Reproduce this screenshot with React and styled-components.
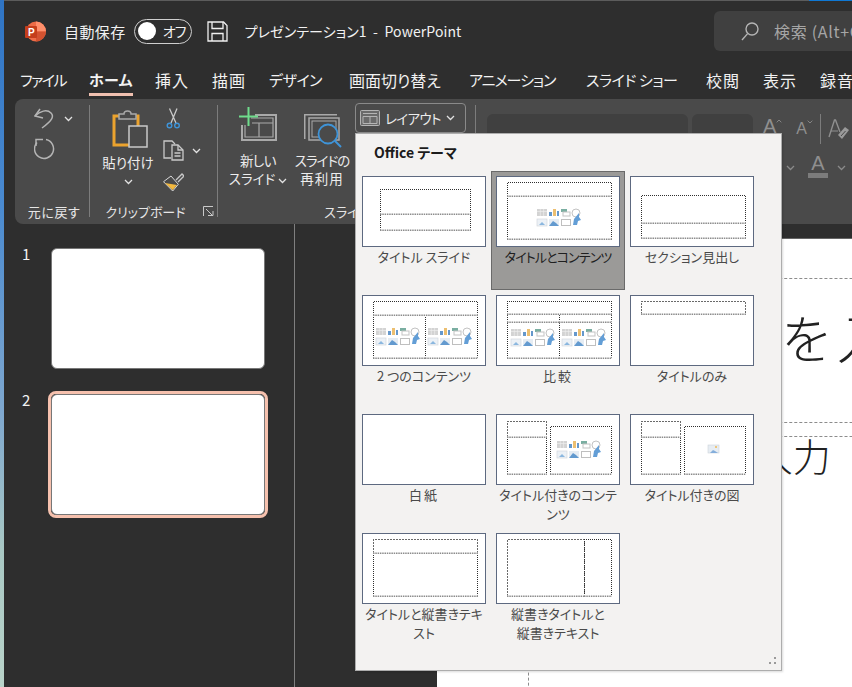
import React from "react";
import styled, { createGlobalStyle } from "styled-components";

const UI_FONT = `"Noto Sans CJK JP", "Liberation Sans", sans-serif`;

const GlobalStyle = createGlobalStyle`
  html, body { margin: 0; padding: 0; background: #2e2e2e; }
  * { box-sizing: border-box; }
  body {
    font-family: ${UI_FONT};
    font-feature-settings: "palt";
    overflow: hidden;
  }
`;

const Shell = styled.div`
  display: flex;
  width: 852px;
  height: 687px;
  overflow: hidden;
`;
const DesktopStrip = styled.div`
  width: 4px;
  background: linear-gradient(180deg, #2f74c4 0%, #4a8ad0 30%, #7fa8cf 60%, #a9c8c4 80%, #b9d3c9 100%);
`;
const Window = styled.div`
  position: relative;
  flex: 1;
  min-width: 0;
  display: flex;
  flex-direction: column;
  background: #2e2e2e;
`;
const TopEdge = styled.div`
  display: flex;
  height: 1px;
  background: #5c5c5c;
  justify-content: flex-end;
  & > i {
    width: 43px;
    background: #0f78d4;
  }
`;

/* title bar */
const TitleBar = styled.div`
  display: flex;
  align-items: center;
  height: 65px;
  padding: 0 0 5px 21px;
  color: #f2f2f2;
`;
const AutoSave = styled.span`
  margin-left: 18px;
  font-size: 15px;
  letter-spacing: 0.4px;
`;
const Toggle = styled.div`
  display: flex;
  align-items: center;
  width: 58px;
  height: 25px;
  margin-left: 8px;
  padding-left: 3px;
  border: 1px solid #cfcfcf;
  border-radius: 13px;
  font-size: 14px;
  letter-spacing: -0.8px;
  & > b {
    width: 18px;
    height: 18px;
    margin-right: 7px;
    border-radius: 50%;
    background: #fff;
  }
`;
const SaveButton = styled.svg`
  margin-left: 15px;
  flex: none;
`;
const DocTitle = styled.span`
  margin-left: 17px;
  font-size: 14px;
  letter-spacing: 0.1px;
  white-space: pre;
`;
const SearchBox = styled.div`
  display: flex;
  align-items: center;
  gap: 15px;
  margin-left: auto;
  width: 138px;
  height: 40px;
  padding-left: 27px;
  border-radius: 6px 0 0 6px;
  background: #404040;
  color: #a6a6a6;
  font-size: 16px;
  letter-spacing: 0.7px;
  white-space: nowrap;
  overflow: hidden;
`;

/* tabs */
const TabRow = styled.div`
  display: flex;
  height: 33px;
  padding-left: 16px;
  white-space: nowrap;
`;
const Tab = styled.div`
  flex: none;
  width: ${(p) => p.$w}px;
  color: #f2f2f2;
`;
const TabText = styled.span`
  display: inline-block;
  height: 30px;
  padding-top: 1px;
  font-size: ${(p) => p.$fs}px;
  line-height: 26px;
  letter-spacing: ${(p) => p.$ls}px;
  font-weight: ${(p) => (p.$active ? 700 : 400)};
  border-bottom: 3px solid ${(p) => (p.$active ? "#f0c0b0" : "transparent")};
`;

/* ribbon */
const Ribbon = styled.div`
  display: flex;
  height: 125px;
  margin-left: 11px;
  padding: 6px 0 7px;
  border-radius: 8px 0 0 8px;
  background: #4a4a4a;
  color: #ececec;
  overflow: hidden;
`;
const Group = styled.div`
  position: relative;
  display: flex;
  flex-direction: column;
  flex: none;
  width: ${(p) => p.$w}px;
  border-right: 1px solid ${(p) => (p.$plain ? "transparent" : "#7c7c7c")};
`;
const GroupBody = styled.div`
  flex: 1;
  display: flex;
  min-height: 0;
`;
const GroupLabel = styled.div`
  height: 14px;
  margin-bottom: -2px;
  text-align: center;
  font-size: 13px;
  line-height: 14px;
  letter-spacing: ${(p) => p.$ls ?? 0}px;
  padding-left: ${(p) => p.$pl ?? 0}px;
  padding-right: ${(p) => p.$pr ?? 0}px;
  white-space: nowrap;
  color: #e6e6e6;
`;
const Launcher = styled.svg`
  position: absolute;
  right: 3px;
  bottom: 0;
`;
const UndoStack = styled.div`
  display: flex;
  flex-direction: column;
  gap: 9px;
  padding: 3px 0 0 19px;
`;
const IconRow = styled.div`
  display: flex;
  align-items: center;
  gap: ${(p) => p.$gap ?? 0}px;
  padding-left: ${(p) => p.$pl ?? 0}px;
`;
const BigButton = styled.div`
  display: flex;
  flex-direction: column;
  align-items: center;
  flex: none;
  width: ${(p) => p.$w}px;
  margin-left: ${(p) => p.$ml ?? 0}px;
  font-size: 13.5px;
  line-height: 19px;
  white-space: nowrap;
  & > svg:first-child {
    margin-top: ${(p) => p.$top ?? 2}px;
    margin-bottom: ${(p) => p.$iconGap ?? 8}px;
    margin-left: ${(p) => p.$iconShift ?? 0}px;
  }
`;
const Line = styled.span`
  display: block;
  margin-top: ${(p) => p.$mt ?? 0}px;
  letter-spacing: ${(p) => p.$ls ?? 0}px;
`;
const SmallStack = styled.div`
  display: flex;
  flex-direction: column;
  gap: 11px;
  padding: 3px 0 0 3px;
`;
const LayoutButton = styled.div`
  display: flex;
  align-items: center;
  align-self: flex-start;
  flex: none;
  width: 111px;
  height: 30px;
  margin: -2px 0 0 1px;
  padding-left: 4px;
  border: 1px solid #8a8a8a;
  border-radius: 4px;
  font-size: 13.5px;
  letter-spacing: -0.6px;
  gap: 5px;
`;
const FontRows = styled.div`
  display: flex;
  flex-direction: column;
  padding: 8px 0 0 11px;
`;
const ComboRow = styled.div`
  display: flex;
  align-items: center;
  gap: 4px;
  height: 32px;
`;
const Combo = styled.div`
  display: flex;
  align-items: flex-end;
  justify-content: flex-end;
  flex: none;
  width: ${(p) => p.$w}px;
  height: 30px;
  padding: 0 2px 5px 0;
  border-radius: 6px;
  background: #404040;
`;
const DimLetter = styled.span`
  display: inline-flex;
  align-items: flex-start;
  flex: none;
  margin: ${(p) => p.$mt ?? 0}px 0 0 ${(p) => p.$ml}px;
  color: #8f8f8f;
  font-family: "Liberation Sans", sans-serif;
  font-size: ${(p) => p.$fs}px;
  line-height: 24px;
`;
const RibbonSep = styled.div`
  flex: none;
  width: 1px;
  height: 30px;
  margin: 0 3px 0 3px;
  background: #7c7c7c;
`;
const ColorRow = styled.div`
  display: flex;
  align-items: flex-start;
  padding: 8px 0 0 299px;
`;
const ColorLetter = styled.div`
  width: 20px;
  margin: 0 9px 0 13px;
  border-bottom: 5px solid #7c7c7c;
  color: #8f8f8f;
  font-family: "Liberation Sans", sans-serif;
  font-size: 20px;
  line-height: 20px;
  text-align: center;
`;

/* main area */
const Main = styled.div`
  flex: 1;
  display: flex;
  min-height: 0;
`;
const Sidebar = styled.div`
  display: flex;
  flex-direction: column;
  gap: 19px;
  flex: none;
  width: 291px;
  padding: 21px 0 0 18px;
  border-right: 1px solid #7f7f7f;
`;
const SlideRow = styled.div`
  display: flex;
  align-items: flex-start;
  color: #f2f2f2;
  font-size: 15px;
  line-height: 18px;
`;
const SlideNum = styled.span`
  width: 26px;
`;
const SlideThumb = styled.div`
  width: 220px;
  height: 127px;
  border: 3px solid ${(p) => (p.$selected ? "#f6c1ae" : "transparent")};
  border-radius: 8px;
  & > div {
    height: 100%;
    border: 1px solid #777;
    border-radius: 6px;
    background: #fff;
  }
`;
const Canvas = styled.div`
  flex: 1;
  min-width: 0;
  padding: 14px 0 0 142px;
`;
const Slide = styled.div`
  height: 100%;
  padding: 39px 0 0 91px;
  background: #fff;
  border-top: 1px solid #666;
  overflow: hidden;
`;
const TitleHolder = styled.div`
  width: 420px;
  height: 145px;
  padding: 22px 0 0 28px;
  border: 1px dashed #8c8c8c;
  color: #222;
  font-size: 52px;
  font-weight: 300;
  line-height: 72px;
  letter-spacing: 4px;
  white-space: nowrap;
  font-feature-settings: "palt" 0;
`;
const BodyHolder = styled.div`
  width: 420px;
  height: 300px;
  margin-top: 13px;
  padding: 0 0 0 37px;
  border: 1px dashed #8c8c8c;
  color: #222;
  font-size: 38px;
  font-weight: 300;
  line-height: 36px;
  white-space: nowrap;
  font-feature-settings: "palt" 0;
`;

/* layout gallery */
const Popup = styled.div`
  position: absolute;
  left: 351px;
  top: 133px;
  width: 427px;
  height: 538px;
  padding-left: 1px;
  border: 1px solid #adadad;
  background: #f3f2f1;
  box-shadow: 1px 1px 2px rgba(0, 0, 0, 0.15);
`;
const PopupTitle = styled.div`
  height: 37px;
  padding-left: 17px;
  color: #1b1b1b;
  font-size: 14px;
  font-weight: 700;
  line-height: 36px;
`;
const TileGrid = styled.div`
  display: grid;
  grid-template-columns: repeat(3, 134px);
  grid-auto-rows: 119px;
`;
const Tile = styled.div`
  padding: ${(p) => (p.$active ? "4px" : "5px")};
  border: ${(p) => (p.$active ? "1px solid #6a6a6a" : "0")};
  background: ${(p) => (p.$active ? "#9b9a98" : "transparent")};
`;
const TileThumb = styled.svg`
  display: block;
  width: 124px;
  height: 71px;
  background: #fff;
  outline: 1px solid #5d6980;
  outline-offset: -1px;
`;
const TileLabel = styled.div`
  margin: 0 -5px;
  color: ${(p) => (p.$active ? "#1f1f1f" : "#4a4a4a")};
  font-size: 13px;
  line-height: 19px;
  letter-spacing: ${(p) => p.$ls ?? 0}px;
  text-align: center;
  white-space: nowrap;
`;
const Grip = styled.svg`
  position: absolute;
  right: 4px;
  bottom: 4px;
`;

const Chevron = ({ c = "#e2e2e2", w = 9, up, style }) => (
  <svg width={w} height={(w * 2) / 3} viewBox="0 0 9 6" style={style}>
    <path d={up ? "M1 5l3.5-3.5L8 5" : "M1 1l3.5 3.5L8 1"} fill="none" stroke={c} strokeWidth="1.3" />
  </svg>
);

const PowerPointLogo = () => (
  <svg width="21" height="21" viewBox="0 0 21 21" style={{ flex: "none" }}>
    <circle cx="11" cy="10.5" r="10" fill="#ed6c47" />
    <path d="M11 .5a10 10 0 0 1 10 10H11z" fill="#ff8f6b" />
    <path d="M11 10.5h10a10 10 0 0 1-10 10z" fill="#d35230" />
    <rect x="0" y="5" width="12" height="12" rx="1" fill="#c43e1c" />
    <text x="3" y="14.5" fill="#fff" fontSize="10" fontWeight="700" fontFamily="Liberation Sans">
      P
    </text>
  </svg>
);

const SaveIcon = () => (
  <SaveButton width="21" height="21" viewBox="0 0 21 21" fill="none" stroke="#f0f0f0" strokeWidth="1.3">
    <path d="M1 1h15.5L20 4.5V20H1z" />
    <path d="M5 1v6.5h11V1M5 20v-7.5h11V20" />
  </SaveButton>
);

const SearchIcon = () => (
  <svg width="18" height="19" viewBox="0 0 18 19" fill="none" stroke="#b4b4b4" strokeWidth="1.4" style={{ flex: "none" }}>
    <circle cx="11" cy="7" r="6" />
    <path d="M6.6 11.6L1 18" />
  </svg>
);

const UndoIcon = () => (
  <svg width="21" height="21" viewBox="0 0 21 21" fill="none" stroke="#b4b4b4" strokeWidth="1.5">
    <path d="M6 1L1 8l8 2" />
    <path d="M1 8c5-5 12-7 16-3 3 3 2 7-9 15" />
  </svg>
);

const RedoIcon = () => (
  <svg width="21" height="22" viewBox="0 0 21 22" fill="none" stroke="#b4b4b4" strokeWidth="1.5">
    <path d="M2 8V1.5h7" />
    <path d="M12 1.6A9.5 9.5 0 1 1 3 4.5" />
  </svg>
);

const PasteIcon = () => (
  <svg width="36" height="38" viewBox="0 0 36 38" fill="none">
    <path d="M8 6H2v29h20" stroke="#eba32e" strokeWidth="3" />
    <path d="M22 6h4v11" stroke="#eba32e" strokeWidth="3" />
    <path d="M7 4h5c0-4 7-4 7 0h5v5H7z" fill="#4a4a4a" stroke="#a9a9a9" strokeWidth="1.5" />
    <rect x="17" y="16" width="18" height="21" fill="#4a4a4a" stroke="#c9c9c9" strokeWidth="1.5" />
  </svg>
);

const ScissorsIcon = () => (
  <svg width="16" height="21" viewBox="0 0 16 21" fill="none">
    <path d="M3.5.5L10 15M11 .5L5 15" stroke="#c9c9c9" strokeWidth="1.3" />
    <circle cx="3.5" cy="17.5" r="2.3" stroke="#3f94d8" strokeWidth="1.4" />
    <circle cx="11" cy="17.5" r="2.3" stroke="#3f94d8" strokeWidth="1.4" />
  </svg>
);

const CopyIcon = () => (
  <svg width="21" height="21" viewBox="0 0 21 21" fill="none" stroke="#c9c9c9" strokeWidth="1.3">
    <path d="M8 18H1V1h8l3 3" />
    <path d="M9 5h6l5 5v10H9z" fill="#4a4a4a" />
    <path d="M15 5v5h5M11.5 13h6M11.5 16h6" />
  </svg>
);

const BrushIcon = () => (
  <svg width="21" height="21" viewBox="0 0 21 21" fill="none">
    <path d="M13 8l6-6 2 2-6 6" stroke="#c9c9c9" strokeWidth="1.4" />
    <path d="M.5 9.7L8 4l7.3 8.3L9.7 19z" stroke="#d9d9d9" strokeWidth="1" />
    <path d="M2 11l12 2-4.3 5z" fill="#f2b83f" />
  </svg>
);

const NewSlideIcon = () => (
  <svg width="39" height="35" viewBox="0 0 39 35" fill="none">
    <path d="M16 8h21v25H3V18" stroke="#a9a9a9" strokeWidth="2" />
    <path d="M12 11h22v19H6V18M13 16h21M20 16v14" stroke="#a9a9a9" strokeWidth="1.2" />
    <path d="M0 9.5h19M9.5 0v19" stroke="#6fdc8c" strokeWidth="2" />
  </svg>
);

const ReuseIcon = () => (
  <svg width="39" height="36" viewBox="0 0 39 36" fill="none">
    <path d="M.75 27V2.75H33" stroke="#a9a9a9" strokeWidth="1.5" />
    <rect x="5" y="6" width="30" height="22" stroke="#a9a9a9" strokeWidth="1.5" />
    <rect x="8" y="9" width="24" height="16" stroke="#a9a9a9" strokeWidth="1" />
    <circle cx="24" cy="22" r="9.5" fill="#4a4a4a" stroke="#3f94d8" strokeWidth="1.8" />
    <path d="M31 29l6 6" stroke="#3f94d8" strokeWidth="2" />
  </svg>
);

const LayoutIcon = () => (
  <svg width="20" height="16" viewBox="0 0 20 16" fill="none" style={{ flex: "none" }}>
    <rect x=".5" y=".5" width="19" height="15" rx="1" fill="#6a6a6a" stroke="#b4b4b4" />
    <path d="M3 3.5h14M3 6.5h14M10 6.5v7M3 13.5h14M3 6.5v7M17 6.5v7" stroke="#b4b4b4" />
  </svg>
);

const EraserIcon = () => (
  <svg width="21" height="21" viewBox="0 0 21 21" fill="none" style={{ flex: "none" }}>
    <path d="M1 18L6.500 1h1L12 13" stroke="#8f8f8f" strokeWidth="1.4" />
    <path d="M3 12h7" stroke="#8f8f8f" strokeWidth="1.2" />
    <path d="M10 16l7-8 4 3-7 9z" fill="#9a9a9a" />
    <path d="M13 17l4.500-5" stroke="#4a4a4a" />
  </svg>
);

const LauncherIcon = () => (
  <Launcher width="11" height="11" viewBox="0 0 11 11" fill="none" stroke="#c9c9c9">
    <path d="M.5 10V.5H10M3 3l6 6M5 9.5h5V5" />
  </Launcher>
);

const ContentCluster = ({ x, y }) => (
  <g transform={`translate(${x} ${y})`} opacity=".8">
    <rect x="0" y="0" width="10" height="7" fill="#c9c9c9" />
    <path d="M0 2.500h10M3.300 0v7M6.600 0v7" stroke="#eee" strokeWidth=".6" />
    <rect x="12" y="3" width="3" height="4" fill="#3f7fc0" />
    <rect x="16" y="0" width="3" height="7" fill="#e8b04e" />
    <rect x="20" y="2" width="2" height="5" fill="#3f7fc0" />
    <rect x="24" y="0" width="6" height="3" fill="#5a9a8a" />
    <rect x="26" y="3" width="7" height="4" fill="none" stroke="#b5b5b5" />
    <circle cx="39" cy="4" r="4" fill="none" stroke="#b5b5b5" />
    <rect x="0" y="10" width="10" height="7" fill="#e8eef5" stroke="#c2c8cf" strokeWidth=".6" />
    <path d="M2 16l3-3 3 3z" fill="#6fa6d8" />
    <rect x="12" y="10" width="10" height="7" fill="#dfe8f1" />
    <path d="M12 17l4-5 3 2 3 3z" fill="#3d82c4" />
    <rect x="24.500" y="10.500" width="9" height="6" fill="none" stroke="#b0b0b0" />
    <path d="M42 4l-5 6-1 6 4 0 1-4 3-1-2-3z" fill="#3d86cc" />
  </g>
);

const PicIcon = ({ x, y }) => (
  <g transform={`translate(${x} ${y})`}>
    <rect width="11" height="8" fill="#e7edf3" stroke="#ccd3da" strokeWidth=".6" />
    <path d="M2 8l3-3 2 1 3 2z" fill="#84aedb" />
    <rect x="7" y="1" width="2" height="2" fill="#eec57a" />
  </g>
);

// three dark dotted sides
const HolderEdges = ({ x, y, w, h, light }) => (
  <path
    d={`M${x + 0.5} ${y + h}V${y + 0.5}H${x + w + 0.5}V${y + h}`}
    stroke={light ? "#6a6a6a" : "#2f2f2f"}
    strokeDasharray={light ? "2 1" : "1 1"}
    fill="none"
    shapeRendering="crispEdges"
  />
);

// the pale dotted row along the bottom goes over the dark dots of the box below it
const HolderFloor = ({ x, y, w, h }) => (
  <g>
    <rect x={x} y={y + h - 0.5} width={w + 1} height="1.6" fill="#fff" />
    <path d={`M${x} ${y + h + 0.3}H${x + w + 1}`} stroke="#8c8c8c" strokeWidth="1.6" strokeDasharray="1.500 .8" />
  </g>
);

const TITLE = { x: 11, y: 6, w: 104, h: 14 };

const LAYOUTS = [
  {
    name: "タイトル スライド",
    boxes: [
      { x: 18, y: 13, w: 90, h: 25 },
      { x: 18, y: 38, w: 90, h: 16 },
    ],
  },
  {
    name: "タイトルとコンテンツ",
    ls: -0.9,
    active: true,
    boxes: [TITLE, { x: 11, y: 20, w: 104, h: 43 }],
    clusters: [[41, 33]],
  },
  {
    name: "セクション見出し",
    boxes: [
      { x: 11, y: 19, w: 104, h: 28 },
      { x: 11, y: 47, w: 104, h: 15 },
    ],
  },
  {
    name: "2 つのコンテンツ",
    boxes: [TITLE, { x: 11, y: 20, w: 52, h: 43 }, { x: 63, y: 20, w: 52, h: 43 }],
    clusters: [
      [14, 33],
      [66, 33],
    ],
  },
  {
    name: "比較",
    ls: 2,
    boxes: [
      { x: 11, y: 6, w: 104, h: 13 },
      { x: 11, y: 19, w: 52, h: 8 },
      { x: 63, y: 19, w: 52, h: 8 },
      { x: 11, y: 27, w: 52, h: 36 },
      { x: 63, y: 27, w: 52, h: 36 },
    ],
    clusters: [
      [15, 34],
      [66, 34],
    ],
  },
  { name: "タイトルのみ", boxes: [{ x: 11, y: 6, w: 104, h: 13, light: true }] },
  { name: "白紙", ls: 2, boxes: [] },
  {
    name: "タイトル付きのコンテ\nンツ",
    boxes: [
      { x: 11, y: 7, w: 39, h: 16, light: true },
      { x: 11, y: 23, w: 39, h: 37 },
      { x: 54, y: 12, w: 61, h: 48 },
    ],
    clusters: [[61, 27]],
  },
  {
    name: "タイトル付きの図",
    boxes: [
      { x: 11, y: 7, w: 39, h: 16, light: true },
      { x: 11, y: 23, w: 39, h: 37 },
      { x: 54, y: 12, w: 61, h: 48 },
    ],
    pic: [78, 31],
  },
  {
    name: "タイトルと縦書きテキ\nスト",
    boxes: [{ ...TITLE, light: true }, { x: 11, y: 20, w: 104, h: 43 }],
  },
  {
    name: "縦書きタイトルと\n縦書きテキスト",
    boxes: [
      { x: 11, y: 6, w: 77, h: 57, light: true },
      { x: 88, y: 6, w: 27, h: 57 },
    ],
  },
];

const TABS = [
  { label: "ファイル", w: 69, fs: 15, ls: -1.5 },
  { label: "ホーム", w: 66, fs: 15, ls: 0.3, active: true },
  { label: "挿入", w: 57, fs: 16, ls: 1 },
  { label: "描画", w: 57, fs: 16, ls: 1 },
  { label: "デザイン", w: 80, fs: 15, ls: -0.5 },
  { label: "画面切り替え", w: 120, fs: 16, ls: 0 },
  { label: "アニメーション", w: 117, fs: 15, ls: -1 },
  { label: "スライド ショー", w: 120, fs: 15, ls: -0.4 },
  { label: "校閲", w: 57, fs: 16, ls: 1 },
  { label: "表示", w: 57, fs: 16, ls: 1 },
  { label: "録音", w: 57, fs: 16, ls: 1 },
];

function LayoutTile({ layout }) {
  const { name, boxes, clusters = [], pic, active, ls } = layout;
  return (
    <Tile $active={active}>
      <TileThumb viewBox="0 0 124 71">
        {boxes.map((b, i) => (
          <HolderEdges key={i} {...b} />
        ))}
        {boxes.map((b, i) => (
          <HolderFloor key={i} {...b} />
        ))}
        {clusters.map(([x, y], i) => (
          <ContentCluster key={i} x={x} y={y} />
        ))}
        {pic && <PicIcon x={pic[0]} y={pic[1]} />}
      </TileThumb>
      <TileLabel $active={active} $ls={ls}>
        {name.split("\n").map((line, i) => (
          <div key={i}>{line}</div>
        ))}
      </TileLabel>
    </Tile>
  );
}

export default function App() {
  return (
    <>
      <GlobalStyle />
      <Shell>
        <DesktopStrip />
        <Window>
          <TopEdge>
            <i />
          </TopEdge>
          <TitleBar>
            <PowerPointLogo />
            <AutoSave>自動保存</AutoSave>
            <Toggle>
              <b />
              オフ
            </Toggle>
            <SaveIcon />
            <DocTitle>{"プレゼンテーション1  -  PowerPoint"}</DocTitle>
            <SearchBox>
              <SearchIcon />
              検索 (Alt+Q)
            </SearchBox>
          </TitleBar>
          <TabRow>
            {TABS.map((t) => (
              <Tab key={t.label} $w={t.w}>
                <TabText $fs={t.fs} $ls={t.ls} $active={t.active}>
                  {t.label}
                </TabText>
              </Tab>
            ))}
          </TabRow>
          <Ribbon>
            <Group $w={75}>
              <GroupBody>
                <UndoStack>
                  <IconRow $gap={9}>
                    <UndoIcon />
                    <Chevron />
                  </IconRow>
                  <RedoIcon />
                </UndoStack>
              </GroupBody>
              <GroupLabel $ls={0.6} $pl={4}>
                元に戻す
              </GroupLabel>
            </Group>
            <Group $w={128}>
              <GroupBody>
                <BigButton $w={64} $ml={6} $top={5} $iconGap={5} $iconShift={3}>
                  <PasteIcon />
                  貼り付け
                  <Chevron style={{ marginTop: 7 }} />
                </BigButton>
                <SmallStack>
                  <IconRow $pl={3}>
                    <ScissorsIcon />
                  </IconRow>
                  <IconRow $gap={8}>
                    <CopyIcon />
                    <Chevron />
                  </IconRow>
                  <BrushIcon />
                </SmallStack>
              </GroupBody>
              <GroupLabel $pr={16}>クリップボード</GroupLabel>
              <LauncherIcon />
            </Group>
            <Group $w={258}>
              <GroupBody>
                <BigButton $w={64} $ml={8} $top={2} $iconGap={9}>
                  <NewSlideIcon />
                  <Line $ls={-0.5}>新しい</Line>
                  <Line $mt={-1}>
                    スライド <Chevron />
                  </Line>
                </BigButton>
                <BigButton $w={64} $top={7} $iconGap={3} $iconShift={2}>
                  <ReuseIcon />
                  <Line $ls={-1}>スライドの</Line>
                  <Line $ls={1} $mt={-1}>
                    再利用
                  </Line>
                </BigButton>
                <LayoutButton>
                  <LayoutIcon />
                  レイアウト
                  <Chevron />
                </LayoutButton>
              </GroupBody>
              <GroupLabel>スライド</GroupLabel>
            </Group>
            <Group $w={380} $plain>
              <FontRows>
                <ComboRow>
                  <Combo $w={201}>
                    <Chevron c="#8a8a8a" />
                  </Combo>
                  <Combo $w={61}>
                    <Chevron c="#8a8a8a" />
                  </Combo>
                  <DimLetter $ml={6} $mt={-6} $fs={20}>
                    A<Chevron c="#8f8f8f" w={6} up style={{ marginTop: 5 }} />
                  </DimLetter>
                  <DimLetter $ml={10} $fs={16}>
                    A<Chevron c="#8f8f8f" w={6} style={{ marginTop: 3 }} />
                  </DimLetter>
                  <RibbonSep />
                  <EraserIcon />
                </ComboRow>
                <ColorRow>
                  <Chevron c="#8a8a8a" style={{ marginTop: 12 }} />
                  <ColorLetter>A</ColorLetter>
                  <Chevron c="#8a8a8a" style={{ marginTop: 12 }} />
                </ColorRow>
              </FontRows>
            </Group>
          </Ribbon>
          <Main>
            <Sidebar>
              <SlideRow>
                <SlideNum>1</SlideNum>
                <SlideThumb>
                  <div />
                </SlideThumb>
              </SlideRow>
              <SlideRow>
                <SlideNum>2</SlideNum>
                <SlideThumb $selected>
                  <div />
                </SlideThumb>
              </SlideRow>
            </Sidebar>
            <Canvas>
              <Slide>
                <TitleHolder>タイトルを入力</TitleHolder>
                <BodyHolder>テキストを入力</BodyHolder>
              </Slide>
            </Canvas>
          </Main>
          <Popup>
            <PopupTitle>Office テーマ</PopupTitle>
            <TileGrid>
              {LAYOUTS.map((l) => (
                <LayoutTile key={l.name} layout={l} />
              ))}
            </TileGrid>
            <Grip width="9" height="9" viewBox="0 0 9 9" fill="#9a9a9a">
              <rect x="6" y="0" width="2" height="2" />
              <rect x="1" y="5" width="2" height="2" />
              <rect x="6" y="5" width="2" height="2" />
            </Grip>
          </Popup>
        </Window>
      </Shell>
    </>
  );
}
